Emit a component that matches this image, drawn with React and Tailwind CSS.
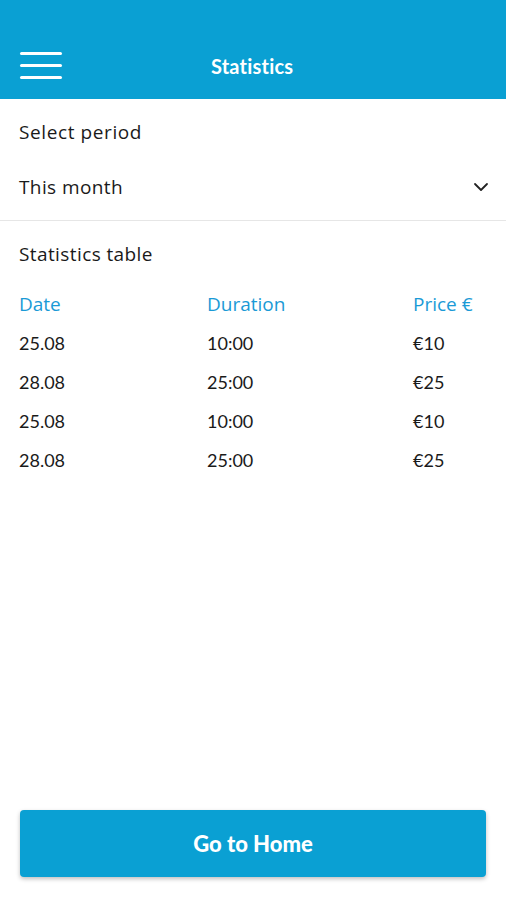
const ROWS = [
  { date: '25.08', duration: '10:00', price: '€10' },
  { date: '28.08', duration: '25:00', price: '€25' },
  { date: '25.08', duration: '10:00', price: '€10' },
  { date: '28.08', duration: '25:00', price: '€25' },
];

export default function App() {
  return (
    <div
      className="flex h-[900px] w-[506px] flex-col bg-white text-[#1a1a1a]"
      style={{ fontFamily: 'Lato, "Open Sans", sans-serif' }}
    >
      <header className="flex h-[99px] shrink-0 items-end bg-[#0aa0d3] pb-[19px]">
        <button className="ml-[20px] flex w-[42px] flex-col gap-[9px] pb-[1px]" aria-label="Menu">
          <span className="h-[3px] w-full rounded-full bg-white" />
          <span className="h-[3px] w-full rounded-full bg-white" />
          <span className="h-[3px] w-full rounded-full bg-white" />
        </button>
        <h1 className="ml-[149px] text-[20px] font-bold leading-[28px] tracking-[0.2px] text-white">Statistics</h1>
      </header>

      <section className="border-b border-[#e6e6e6] px-[19px] font-['Open_Sans',sans-serif]">
        <p className="pt-[20px] text-[19px] leading-[26px] tracking-[0.6px]">Select period</p>
        <div className="flex items-center justify-between pt-[29px] pb-[20px]">
          <span className="text-[19px] leading-[26px] tracking-[0.4px]">This month</span>
          <svg width="18" height="18" viewBox="0 0 18 18" fill="none" className="mr-[-3px]">
            <path d="M3 6l6 6 6-6" stroke="#222" strokeWidth="1.8" strokeLinecap="round" strokeLinejoin="round" />
          </svg>
        </div>
      </section>

      <section className="px-[19px] pt-[20px]">
        <p className="font-['Open_Sans',sans-serif] text-[19px] leading-[26px] tracking-[0.4px]">Statistics table</p>
        <div className="mt-[24px] grid grid-cols-[188px_206px_1fr] font-['Open_Sans',sans-serif] text-[19px] leading-[26px] text-[#1a9ad6]">
          <span>Date</span>
          <span>Duration</span>
          <span>Price €</span>
        </div>
        <div className="mt-[13px] flex flex-col gap-[13px]">
          {ROWS.map((r, i) => (
            <div key={i} className="grid grid-cols-[188px_206px_1fr] text-[18px] leading-[26px]">
              <span>{r.date}</span>
              <span>{r.duration}</span>
              <span>{r.price}</span>
            </div>
          ))}
        </div>
      </section>

      <div className="mt-auto px-[20px] pb-[23px]">
        <button className="h-[67px] w-full rounded-[4px] bg-[#0aa0d3] text-[22px] font-black text-white shadow-[0_2px_4px_rgba(0,0,0,0.25)]">
          Go to Home
        </button>
      </div>
    </div>
  );
}
